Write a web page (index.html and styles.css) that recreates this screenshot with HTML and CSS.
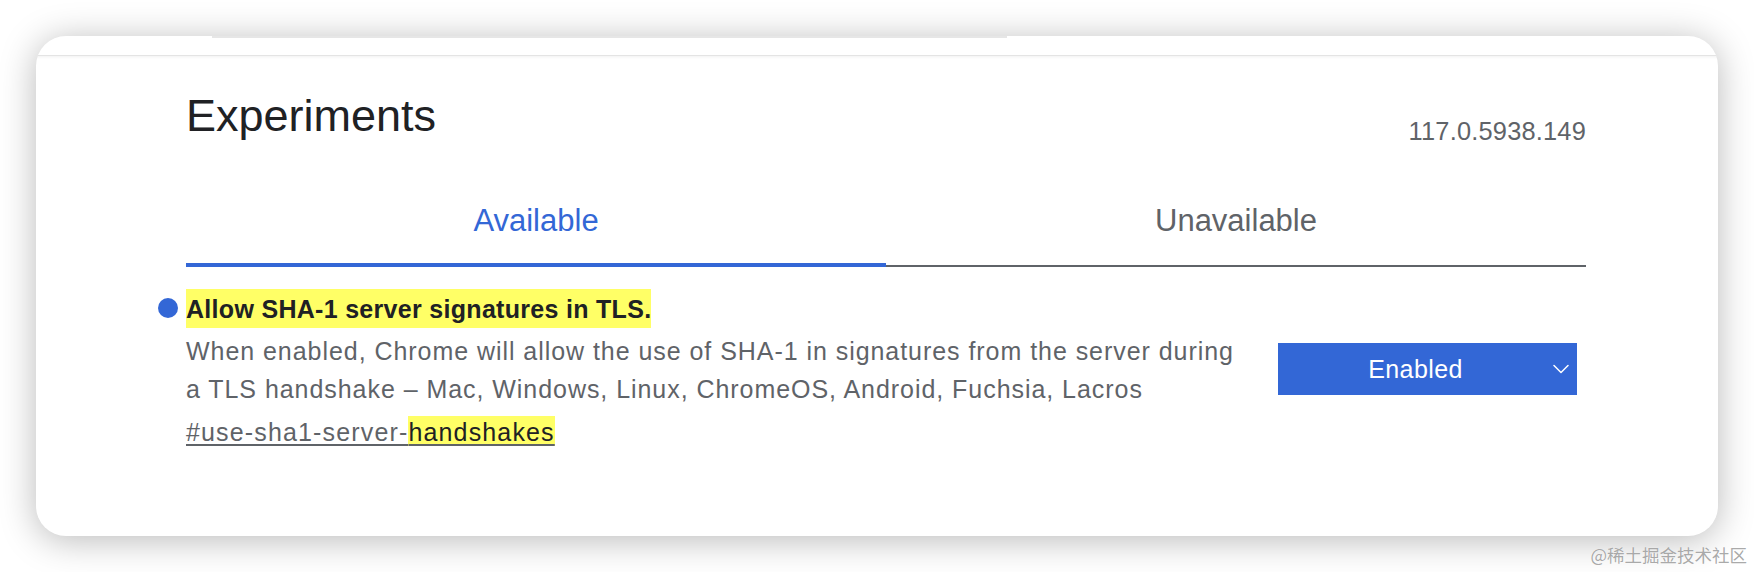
FILE: index.html
```html
<!DOCTYPE html>
<html lang="en">
<head>
<meta charset="utf-8">
<title>Experiments</title>
<link rel="stylesheet" href="styles.css">
</head>
<body>
<div class="page">
  <main class="card">
    <div class="topbar"><div class="topbar-tab"></div></div>
    <div class="content">
      <header class="header">
        <h1 class="title">Experiments</h1>
        <span class="version">117.0.5938.149</span>
      </header>
      <nav class="tabs">
        <div class="tab active">Available</div>
        <div class="tab">Unavailable</div>
      </nav>
      <section class="experiment">
        <div class="exp-name-row">
          <span class="dot"></span>
          <h2 class="exp-name"><mark class="hl hl-title">Allow SHA-1 server signatures in TLS.</mark></h2>
        </div>
        <div class="exp-body">
          <div class="exp-text">
            <p class="exp-desc">When enabled, Chrome will allow the use of SHA-1 in signatures from the server during a TLS handshake – Mac, Windows, Linux, ChromeOS, Android, Fuchsia, Lacros</p>
            <div class="exp-permalink"><a class="exp-link" href="#use-sha1-server-handshakes">#use-sha1-server-<mark class="hl hl-link">handshakes</mark></a></div>
          </div>
          <div class="exp-actions">
            <div class="select">
              <span class="select-label">Enabled</span>
              <svg class="chevron" width="16" height="10" viewBox="0 0 16 10" aria-hidden="true"><polyline points="1,1.5 8,8.5 15,1.5" fill="none" stroke="#ffffff" stroke-width="1.5" stroke-linecap="round" stroke-linejoin="round"/></svg>
            </div>
          </div>
        </div>
      </section>
    </div>
  </main>
  <div class="watermark">@稀土掘金技术社区</div>
</div>
</body>
</html>
```

FILE: styles.css
```css
* { box-sizing: border-box; }

html, body {
  margin: 0;
  padding: 0;
  background: #ffffff;
}

body {
  font-family: "Liberation Sans", Arial, sans-serif;
}

.page {
  position: relative;
  width: 1754px;
  height: 572px;
  padding: 36px 36px 36px 36px;
  background: #ffffff;
}

.card {
  width: 1682px;
  height: 500px;
  background: #ffffff;
  border-radius: 30px;
  overflow: hidden;
  box-shadow: 0 4px 36px rgba(0, 0, 0, 0.28);
}

.topbar {
  height: 20px;
  border-bottom: 1px solid #e4e4e4;
  box-shadow: 0 1px 3px rgba(0, 0, 0, 0.06);
}

.topbar-tab {
  margin-left: 176px;
  width: 795px;
  height: 2px;
  background: #e6e6e6;
}

.content {
  padding: 34px 132px 0 150px;
}

.header {
  display: flex;
  justify-content: space-between;
  align-items: flex-start;
}

.title {
  margin: 0;
  font-size: 45px;
  line-height: 52px;
  font-weight: 400;
  color: #202124;
}

.version {
  margin-top: 26px;
  font-size: 25.4px;
  line-height: 30px;
  letter-spacing: 0.2px;
  color: #5f6368;
}

.tabs {
  margin-top: 57px;
  display: grid;
  grid-template-columns: 1fr 1fr;
  border-bottom: 2px solid #5f6368;
}

.tab {
  text-align: center;
  font-size: 31px;
  line-height: 36px;
  padding-bottom: 24px;
  color: #5f6368;
}

.tab.active {
  color: #3367d6;
  border-bottom: 4px solid #3367d6;
  margin-bottom: -2px;
}

.experiment {
  margin-top: 22px;
}

.exp-name-row {
  display: flex;
  align-items: center;
  gap: 8px;
  margin-left: -28px;
}

.dot {
  width: 20px;
  height: 20px;
  border-radius: 50%;
  background: #3367d6;
  flex: 0 0 20px;
}

.exp-name {
  margin: 0;
  font-size: 25px;
  line-height: 38px;
  font-weight: 700;
  letter-spacing: 0.3px;
  color: #202124;
}

.hl {
  background: #ffff66;
  color: #202124;
}

.hl-title {
  padding: 5.5px 0;
}

.hl-link {
  padding: 2px 0 0 0;
}

.exp-body {
  display: flex;
  align-items: flex-start;
  margin-top: 5px;
}

.exp-text {
  flex: 0 0 1062px;
}

.exp-desc {
  margin: 0;
  font-size: 25px;
  line-height: 38px;
  letter-spacing: 0.95px;
  color: #5f6368;
}

.exp-permalink {
  margin-top: 5px;
  font-size: 25px;
  line-height: 38px;
  letter-spacing: 1.15px;
}

.exp-link {
  color: #5f6368;
  text-decoration: underline;
  text-decoration-thickness: 2px;
  text-underline-offset: 3px;
  text-decoration-color: #5f6368;
}

.exp-actions {
  margin-left: 30px;
  margin-top: 11px;
}

.select {
  width: 299px;
  height: 52px;
  background: #3367d6;
  display: flex;
  align-items: center;
  color: #ffffff;
}

.select-label {
  flex: 1;
  text-align: center;
  font-size: 25px;
  line-height: 52px;
  letter-spacing: 0.4px;
}

.chevron {
  flex: 0 0 16px;
  margin-right: 8px;
}

.watermark {
  position: absolute;
  top: 546px;
  right: 7px;
  font-family: "Noto Sans CJK SC", "Liberation Sans", sans-serif;
  font-size: 17.5px;
  line-height: 18px;
  color: rgba(120, 120, 120, 0.65);
  text-shadow: 0 0 1px rgba(255, 255, 255, 0.9);
  white-space: nowrap;
}
```
